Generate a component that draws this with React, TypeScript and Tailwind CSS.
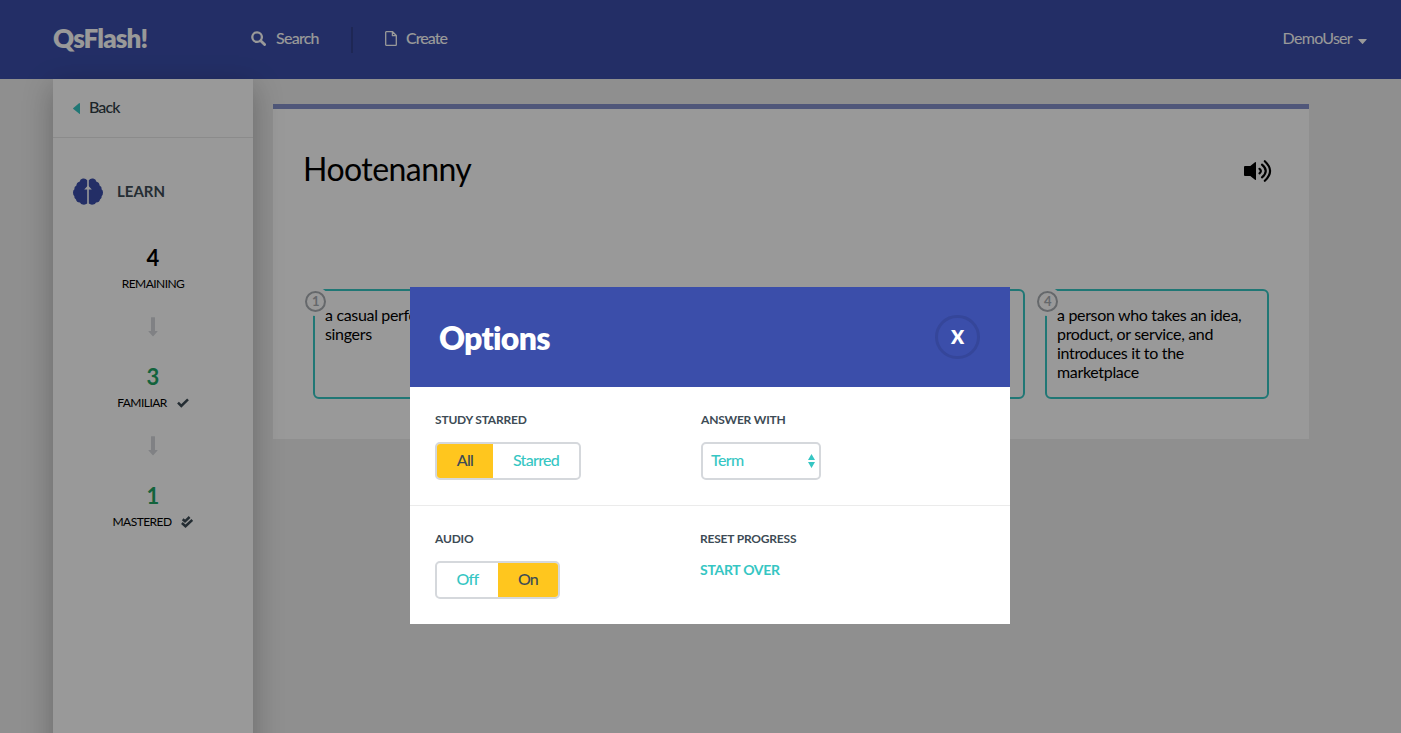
import type { ReactNode } from "react";

function Header() {
  return (
    <header className="flex h-[79px] items-center bg-[#3b4eaa] pr-[34px] pb-[3px] pl-[53px] text-white">
      <div className="w-[198px] text-[26px] leading-8 font-extrabold tracking-[-0.85px]">QsFlash!</div>
      <a className="flex w-[100px] items-center">
        <svg className="h-[15px] w-[15px]" viewBox="0 0 15 15" fill="none" stroke="currentColor">
          <circle cx="6.1" cy="6.1" r="4.8" strokeWidth="2.3" />
          <path d="M9.7 9.7 13.6 13.6" strokeWidth="2.8" strokeLinecap="round" />
        </svg>
        <span className="ml-[10px] text-base leading-5 font-medium tracking-[-0.75px]">Search</span>
      </a>
      <div className="mt-[3px] h-[26px] w-[2px] bg-[#32428e]" />
      <a className="ml-[32px] flex items-center">
        <svg className="mt-px h-[15px] w-[12px]" viewBox="0 0 12 15" fill="none" stroke="currentColor" strokeWidth="1.3" strokeLinejoin="round">
          <path d="M.7 1.3q0-.6.6-.6h6.3l3.7 3.8v9.2q0 .6-.6.6H1.3q-.6 0-.6-.6zM7.4.8v3.9h3.8" />
        </svg>
        <span className="ml-[9px] text-base leading-5 font-medium tracking-[-0.95px]">Create</span>
      </a>
      <a className="ml-auto flex items-center">
        <span className="text-base leading-5 tracking-[-0.7px]">DemoUser</span>
        <svg className="mt-[6px] ml-[6px] h-[5px] w-[9px]" viewBox="0 0 9 5" fill="currentColor">
          <path d="M.6 0h7.8q.6 0 .3.5L4.9 4.7q-.4.4-.8 0L.3.5Q0 0 .6 0z" />
        </svg>
      </a>
    </header>
  );
}

function DownArrow() {
  return (
    <svg className="mx-auto mt-[25px] mb-[25px] block h-[20px] w-[10px] text-[#d5d8dc]" viewBox="0 0 10 20" fill="currentColor">
      <path d="M3 .6Q3 .2 3.4.2h3.2q.4 0 .4.4V14h2.2q.7 0 .3.6L5.500 19q-.5.5-1 0L.5 14.600q-.4-.6.3-.6H3z" />
    </svg>
  );
}

function Check() {
  return (
    <svg className="h-[10px] w-[12px]" viewBox="0 0 12 10" fill="none" stroke="#3d4b55" strokeWidth="2.5">
      <path d="M1 4.700 4.300 8 11 1.300" />
    </svg>
  );
}

function DoubleCheck() {
  return (
    <svg className="h-[12px] w-[12px]" viewBox="0 0 12 12" fill="none" stroke="#3d4b55" strokeWidth="2.500">
      <path d="M1.700 3.300 4 5.300 8.600 1" />
      <path d="M.9 7 4.500 10.200 11.300 3.900" />
    </svg>
  );
}

function Stat({ value, label, color, icon }: { value: string; label: string; color: string; icon?: ReactNode }) {
  return (
    <div>
      <div className={`text-center text-[22px] leading-[28px] font-bold ${color}`}>{value}</div>
      <div className="mt-[4px] flex h-[16px] items-center justify-center gap-[10px] text-[12px] leading-4 tracking-[-0.55px] text-black">
        {label}
        {icon}
      </div>
    </div>
  );
}

function Sidebar() {
  return (
    <aside className="relative z-10 h-[700px] w-[200px] shrink-0 bg-white shadow-[0_8px_28px_rgba(0,0,0,0.27)]">
      <a className="flex h-[59px] items-center border-b border-[#e8e8e8] pl-[20px] text-base leading-5 text-[#2f3c45]">
        <svg className="h-[11px] w-[7px]" viewBox="0 0 6 11" preserveAspectRatio="none" fill="#36c6c3">
          <path d="M5.400 0q.6 0 .6.600v9.800q0 .9-.6.400L.3 6q-.5-.5 0-1z" />
        </svg>
        <span className="-mt-[2px] ml-[9px] font-medium tracking-[-0.9px] text-[#2f3c45]">Back</span>
      </a>
      <div className="mt-[39px] flex h-[28px] items-center pl-[20px]">
        <svg className="h-[27px] w-[30px]" viewBox="0 0 30 27">
          <g fill="#3b4eaa">
            <path d="M14.200 2.200V25.500Q12.300 27 9.800 26.500 7.800 26.500 7 24.500 3.500 24.600 3 21.500 1 20.500 1.300 18 0 17 0 14.500T1.300 11.500Q1 8.500 3.400 7.500 3.500 4.500 6.500 3.700 7.200 1 9.800.6 12.500 0 14.200 2.200z" />
            <path d="M15.800 2.200V25.500Q17.700 27 20.200 26.500 22.200 26.500 23 24.500 26.500 24.600 27 21.500 29 20.500 28.700 18 30 17 30 14.500T28.700 11.500Q29 8.500 26.600 7.500 26.500 4.500 23.500 3.700 22.800 1 20.200.6 17.500 0 15.800 2.200z" />
          </g>
          <path d="M15 7.500 18.800 11.500H11.200z" fill="white" />
        </svg>
        <span className="ml-[14px] text-[15px] leading-5 font-bold tracking-[0px] text-[#3d4b55]">LEARN</span>
      </div>
      <div className="pt-[39px]">
        <Stat value="4" label="REMAINING" color="text-black" />
        <DownArrow />
        <div className="h-px" />
        <Stat value="3" label="FAMILIAR" color="text-[#1fa565]" icon={<Check />} />
        <DownArrow />
        <div className="h-px" />
        <Stat value="1" label="MASTERED" color="text-[#1fa565]" icon={<DoubleCheck />} />
      </div>
    </aside>
  );
}

function Answer({ n, children }: { n: number; children?: ReactNode }) {
  return (
    <div className="relative h-[110px] w-[224px] rounded-[6px] border-2 border-[#36c6c3] px-[10px] pt-[14px] text-base leading-[19px] tracking-[-0.33px] text-black">
      <span className="absolute -top-[4px] -left-[14px] flex h-[29px] w-[29px] items-center justify-center rounded-full bg-white">
        <span className="flex h-[21px] w-[21px] items-center justify-center rounded-full border-2 border-[#a9adb2] text-[13px] leading-none font-bold text-[#a9adb2]">
          {n}
        </span>
      </span>
      <span className="relative block whitespace-nowrap">{children}</span>
    </div>
  );
}

function Question() {
  return (
    <main className="mt-[25px] ml-[20px] h-[335px] w-[1036px] border-t-[5px] border-[#8692cb] bg-white">
      <div className="flex h-[124px] items-center justify-between pr-[37px] pl-[30px]">
        <h1 className="-mt-[4px] text-[32px] leading-10 tracking-[-0.55px] text-black">Hootenanny</h1>
        <svg className="-mt-[1px] h-[24px] w-[28px]" viewBox="0 0 28 24" fill="none" stroke="black" strokeWidth="2.200" strokeLinecap="round">
          <path d="M0 8q0-1 1-1h5.300l4.700-3.700q1-.6 1 .5v16.400q0 1.100-1 .5L6.300 17H1q-1 0-1-1z" fill="black" stroke="none" />
          <path d="M15.500 9.800q2.800 2.200 0 4.500" />
          <path d="M18 5.700q7.500 6.300 0 12.600" />
          <path d="M20.800 2.200q10.500 9.800 0 19.600" />
        </svg>
      </div>
      <div className="mt-[56px] flex gap-[20px] pl-[40px]">
        <Answer n={1}>a casual perfo<br />singers</Answer>
        <Answer n={2} />
        <Answer n={3} />
        <Answer n={4}>a person who takes an idea,<br />product, or service, and<br />introduces it to the<br />marketplace</Answer>
      </div>
    </main>
  );
}

function Label({ children }: { children: ReactNode }) {
  return <div className="text-[12px] leading-4 font-bold tracking-[-0.2px] text-[#3d4b55]">{children}</div>;
}

function Options() {
  return (
    <section className="h-[337px] w-[600px] bg-white">
      <div className="flex h-[100px] items-center justify-between bg-[#3b4eaa] px-[30px] text-white">
        <h2 className="mt-[1px] -ml-px text-[32px] leading-10 font-extrabold tracking-[-0.75px]">Options</h2>
        <button className="flex h-[44px] w-[45px] items-center justify-center rounded-full border-[3px] border-[#35469a] pb-px text-[19px] leading-5 font-extrabold">
          X
        </button>
      </div>
      <div className="flex h-[119px] border-b border-[#ebebeb] pt-[25px] pl-[25px]">
        <div className="w-[266px]">
          <Label>STUDY STARRED</Label>
          <div className="mt-[14px] flex h-[38px] w-[146px] overflow-hidden rounded-[5px] border-2 border-[#d5d8dc] text-base leading-[32px] font-medium tracking-[-0.7px]">
            <span className="w-[56px] bg-[#ffc61e] text-center text-[#3d4b55]">All</span>
            <span className="flex-1 text-center text-[#36c6c3]">Starred</span>
          </div>
        </div>
        <div>
          <Label>ANSWER WITH</Label>
          <div className="mt-[14px] flex h-[38px] w-[120px] items-center justify-between rounded-[5px] border-2 border-[#d5d8dc] pr-[4px] pl-[8px] text-base leading-5 font-medium tracking-[-0.6px] text-[#36c6c3]">
            <span className="-mt-[2px]">Term</span>
            <svg className="h-[14px] w-[7px]" viewBox="0 0 7 14" fill="currentColor">
              <path d="M3.500 0 7 6H0zM3.500 14 0 8H7z" />
            </svg>
          </div>
        </div>
      </div>
      <div className="flex pt-[25px] pl-[25px]">
        <div className="w-[265px]">
          <Label>AUDIO</Label>
          <div className="mt-[14px] flex h-[38px] w-[125px] overflow-hidden rounded-[5px] border-2 border-[#d5d8dc] text-base leading-[32px] font-medium tracking-[-0.7px]">
            <span className="w-[61px] text-center text-[#36c6c3]">Off</span>
            <span className="flex-1 bg-[#ffc61e] text-center text-[#3d4b55]">On</span>
          </div>
        </div>
        <div>
          <Label>RESET PROGRESS</Label>
          <div className="mt-[13px] text-[14px] leading-5 font-bold tracking-[-0.3px] text-[#36c6c3]">START OVER</div>
        </div>
      </div>
    </section>
  );
}

export default function App() {
  return (
    <div className="relative h-[733px] w-[1401px] overflow-hidden bg-[#eeeeee] font-['Lato',sans-serif]">
      <Header />
      <div className="flex items-start pl-[53px]">
        <Sidebar />
        <Question />
      </div>
      <div className="absolute inset-0 z-20 bg-black/40 pt-[287px] pl-[410px]">
        <Options />
      </div>
    </div>
  );
}
